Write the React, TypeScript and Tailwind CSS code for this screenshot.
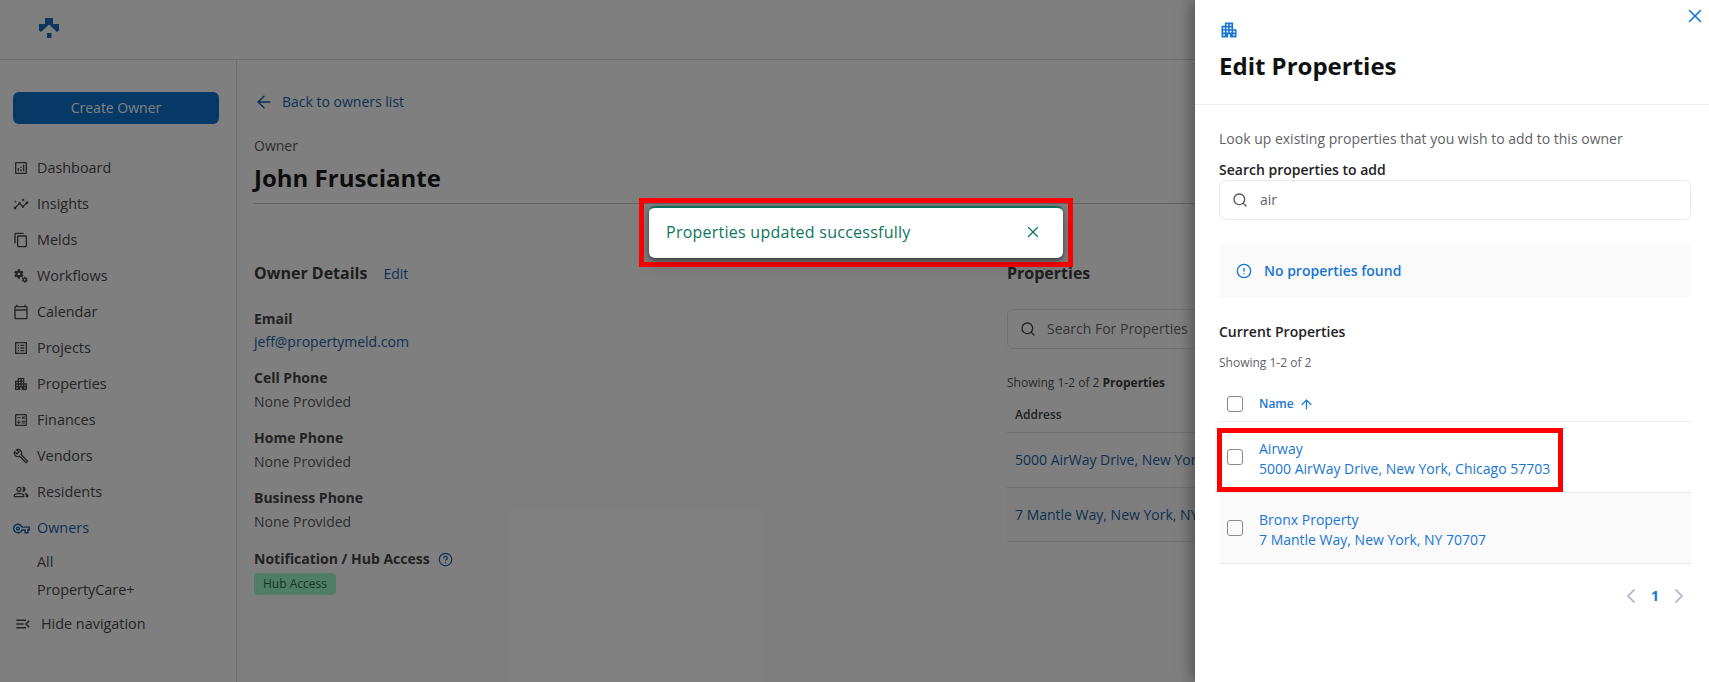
import { ArrowLeft, ArrowUp, ChevronLeft, ChevronRight, CircleAlert, CircleHelp, Search, X } from "lucide-react";
import {
  MdApartment,
  MdInsights,
  MdMenuOpen,
  MdMiscellaneousServices,
  MdOutlineAnalytics,
  MdOutlineBuild,
  MdOutlineCalculate,
  MdOutlineCalendarToday,
  MdOutlineContentCopy,
  MdOutlineListAlt,
  MdOutlinePeopleAlt,
  MdOutlineVpnKey,
} from "react-icons/md";

const navItems = [
  { label: "Dashboard", icon: MdOutlineAnalytics },
  { label: "Insights", icon: MdInsights },
  { label: "Melds", icon: MdOutlineContentCopy },
  { label: "Workflows", icon: MdMiscellaneousServices },
  { label: "Calendar", icon: MdOutlineCalendarToday },
  { label: "Projects", icon: MdOutlineListAlt },
  { label: "Properties", icon: MdApartment },
  { label: "Finances", icon: MdOutlineCalculate },
  { label: "Vendors", icon: MdOutlineBuild },
  { label: "Residents", icon: MdOutlinePeopleAlt },
];

const details = [
  { label: "Cell Phone", value: "None Provided" },
  { label: "Home Phone", value: "None Provided" },
  { label: "Business Phone", value: "None Provided" },
];

const currentProperties = [
  { name: "Airway", address: "5000 AirWay Drive, New York, Chicago 57703" },
  { name: "Bronx Property", address: "7 Mantle Way, New York, NY 70707" },
];

function Logo() {
  return (
    <svg viewBox="0 0 20 20" className="h-5 w-5 text-[#1c6fc0]" fill="currentColor">
      <path d="M6 0h8v6h6v6.500L18 14 10 6.500 2 14 0 12.500V6h6z" />
      <rect x="8" y="15" width="4.500" height="5" />
    </svg>
  );
}

function Sidebar() {
  return (
    <aside className="w-[237px] shrink-0 border-r border-[#dcdcdc] pt-8">
      <div className="px-[13px]">
        <button className="h-8 w-[206px] rounded-md bg-[#0e72cc] text-sm text-white">Create Owner</button>
      </div>
      <nav className="mt-[26px] text-[14.4px] text-[#4a4a4a]">
        {navItems.map(({ label, icon: Icon }) => (
          <div key={label} className="flex h-9 items-center pl-[13px]">
            <Icon className="h-4 w-4 shrink-0" />
            <span className="ml-[8px]">{label}</span>
          </div>
        ))}
        <div className="flex h-9 items-center pl-[13px] text-[#1d5fa8]">
          <MdOutlineVpnKey className="h-[17px] w-[17px] shrink-0" />
          <span className="ml-[7px]">Owners</span>
        </div>
        <div className="mt-[2px] pl-[37px]">
          <div className="flex h-7 items-center">All</div>
          <div className="flex h-7 items-center">PropertyCare+</div>
        </div>
        <div className="mt-1 flex h-8 items-center pl-[14px]">
          <MdMenuOpen className="h-[18px] w-[18px] shrink-0" />
          <span className="ml-[9px]">Hide navigation</span>
        </div>
      </nav>
    </aside>
  );
}

function OwnerDetails() {
  return (
    <div className="w-[753px] shrink-0 text-sm">
      <div className="flex items-baseline">
        <h2 className="text-base font-bold text-[#3d3d3d]">Owner Details</h2>
        <span className="ml-4 text-[#1d5fa8]">Edit</span>
      </div>
      <div className="mt-[24px] font-bold leading-5 text-[#454545]">Email</div>
      <div className="mt-[3px] leading-5 text-[#1d5fa8]">jeff@propertymeld.com</div>
      {details.map((item) => (
        <div key={item.label} className="mt-[16px]">
          <div className="font-bold leading-5 text-[#454545]">{item.label}</div>
          <div className="mt-1 leading-5 text-[#5a5a5a]">{item.value}</div>
        </div>
      ))}
      <div className="mt-[17px] flex items-center font-bold leading-5 text-[#454545]">
        Notification / Hub Access
        <CircleHelp className="ml-2 h-[15px] w-[15px] text-[#1d5fa8]" />
      </div>
      <span className="mt-1 inline-flex h-[22px] items-center rounded bg-[#9ffad0] px-[9px] text-xs text-[#2c6e50]">
        Hub Access
      </span>
    </div>
  );
}

function OwnerProperties() {
  return (
    <div className="w-[700px] shrink-0">
      <h2 className="text-base font-bold text-[#3d3d3d]">Properties</h2>
      <div className="mt-[24px] flex h-[40px] w-[400px] items-center rounded-md border border-[#e3e3e3] pl-[12px] text-sm text-[#6b6b6b]">
        <Search className="h-4 w-4 text-[#444]" />
        <span className="ml-[11px]">Search For Properties</span>
      </div>
      <div className="mt-[26px] text-xs text-[#555]">
        Showing 1-2 of 2 <span className="font-bold text-[#3d3d3d]">Properties</span>
      </div>
      <div className="mt-[16px] border-b border-[#e3e3e3] pb-[9px] pl-2 text-xs font-semibold leading-4 text-[#444]">
        Address
      </div>
      <div className="flex h-[55px] items-center border-b border-[#e3e3e3] pl-2 text-sm text-[#1d5fa8]">
        5000 AirWay Drive, New York, Chicago 57703
      </div>
      <div className="flex h-[54px] items-center border-b border-[#e3e3e3] bg-[#fafafa] pl-2 text-sm text-[#1d5fa8]">
        7 Mantle Way, New York, NY 70707
      </div>
    </div>
  );
}

function EditPanel() {
  return (
    <div className="absolute right-0 top-0 flex h-full w-[514px] flex-col bg-white shadow-[-4px_0_14px_rgba(0,0,0,0.35)]">
      <X strokeWidth={1.75} className="absolute right-[3px] top-[5px] h-[22px] w-[22px] text-[#1976d2]" />
      <div className="h-[105px] border-b border-[#e9ecf2] pl-6 pt-5">
        <MdApartment className="h-5 w-5 text-[#1976d2]" />
        <h1 className="mt-[10px] text-2xl font-bold leading-8 text-[#111]">Edit Properties</h1>
      </div>
      <div className="pl-6 pr-[18px] pt-6 text-sm">
        <p className="leading-5 text-[#5f6368]">Look up existing properties that you wish to add to this owner</p>
        <label className="mt-[11px] block font-semibold leading-5 text-[#222]">Search properties to add</label>
        <div className="flex h-10 items-center rounded-md border border-[#e6e8f0] pl-[12px] text-[#5f6368]">
          <Search className="h-[16px] w-[16px] text-[#555]" />
          <span className="ml-[12px]">air</span>
        </div>
        <div className="mt-6 flex h-[54px] items-center rounded bg-[#fafafa] pl-[17px] font-semibold text-[#1976d2]">
          <CircleAlert className="h-4 w-4" />
          <span className="ml-[12px]">No properties found</span>
        </div>
        <h3 className="mt-[24px] font-semibold leading-5 text-[#222]">Current Properties</h3>
        <div className="mt-[13px] text-xs leading-4 text-[#5f6368]">Showing 1-2 of 2</div>
        <div className="mt-[16px] flex h-[35px] items-center border-b border-[#e9ecf2] pl-2 text-xs font-semibold text-[#1976d2]">
          <span className="h-4 w-4 rounded-[3px] border border-[#8a8a8a]" />
          <span className="ml-[16px]">Name</span>
          <ArrowUp className="ml-[5px] h-[15px] w-[15px]" />
        </div>
        <div className="relative">
          {currentProperties.map((property, index) => (
            <div
              key={property.name}
              className={
                index === 1
                  ? "flex h-[71px] items-center border-b border-[#e9ecf2] bg-[#fafafa] pl-2 text-[#1976d2]"
                  : "flex h-[71px] items-center border-b border-[#e9ecf2] pl-2 text-[#1976d2]"
              }
            >
              <span className="h-4 w-4 shrink-0 rounded-[3px] border border-[#8a8a8a]" />
              <div className="ml-[16px] pt-1 leading-5">
                <div>{property.name}</div>
                <div>{property.address}</div>
              </div>
            </div>
          ))}
          <div className="absolute -left-[2px] top-[6px] h-[64px] w-[346px] border-[5px] border-[#ff0000]" />
        </div>
        <div className="mt-[20px] flex items-center justify-end">
          <ChevronLeft strokeWidth={1.75} className="h-6 w-6 text-[#a9b4c4]" />
          <span className="mx-[8px] text-sm font-bold text-[#1976d2]">1</span>
          <ChevronRight strokeWidth={1.75} className="h-6 w-6 text-[#a9b4c4]" />
        </div>
      </div>
    </div>
  );
}

function Toast() {
  return (
    <div className="absolute left-[639px] top-[198px] h-[69px] w-[434px] border-[5px] border-[#ff0000] pl-[5px] pt-[3px]">
      <div className="flex h-[52px] w-[414px] items-center justify-between rounded-md border-t-2 border-[#0e6f5c] bg-white pb-[2px] pl-[17px] pr-[21px] text-base font-medium tracking-[0.25px] text-[#0e7560] shadow-[0_2px_4px_rgba(0,0,0,0.45),0_6px_18px_rgba(0,0,0,0.2)]">
        <span>Properties updated successfully</span>
        <X strokeWidth={1.75} className="h-[18px] w-[18px]" />
      </div>
    </div>
  );
}

export default function App() {
  return (
    <div className="relative h-[682px] w-full overflow-hidden bg-white font-['Open_Sans',sans-serif]">
      <header className="flex h-[60px] items-center border-b border-[#dcdcdc] pb-1 pl-[39px]">
        <Logo />
      </header>
      <div className="flex h-[622px]">
        <Sidebar />
        <main className="min-w-0 flex-1 overflow-hidden pl-[17px] pt-[32px]">
          <div className="flex h-5 items-center text-sm text-[#1d5fa8]">
            <ArrowLeft strokeWidth={1.75} className="h-5 w-5" />
            <span className="ml-[8px]">Back to owners list</span>
          </div>
          <div className="mt-[24px] text-sm leading-5 text-[#5a5a5a]">Owner</div>
          <h1 className="mt-[6px] border-b border-[#c9c9c9] pb-[9px] text-[24px] font-bold leading-8 text-[#1a1a1a]">
            John Frusciante
          </h1>
          <div className="mt-[57px] flex">
            <OwnerDetails />
            <OwnerProperties />
          </div>
        </main>
      </div>
      <div className="absolute inset-0 bg-black/50" />
      <EditPanel />
      <Toast />
    </div>
  );
}
